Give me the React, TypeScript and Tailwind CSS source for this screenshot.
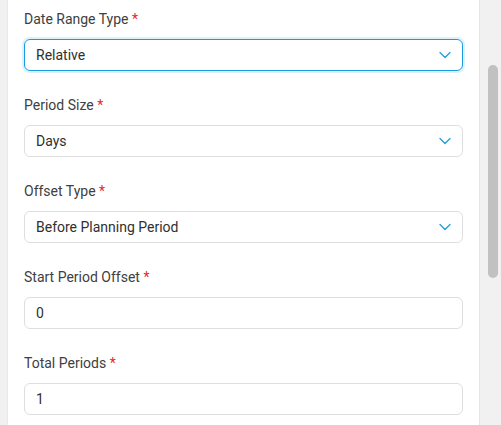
import React from "react";

const Chevron = () => (
  <svg width="12" height="8" viewBox="0 0 12 8" fill="none" className="shrink-0">
    <path d="M1 1.5 L6 6.5 L11 1.5" stroke="#2a9fdb" strokeWidth="1.4" strokeLinecap="round" strokeLinejoin="round" />
  </svg>
);

function Field({ label, value, select, focused }: { label: string; value: string; select?: boolean; focused?: boolean }) {
  return (
    <div className="flex flex-col">
      <div className="h-[20px] text-[14px] leading-[20px] text-[#404040]">
        {label} <span className="text-[#e8262b]">*</span>
      </div>
      <div
        className={
          "mt-[10px] h-[32px] rounded-[6px] border flex items-center justify-between pl-[11px] pr-[11px] text-[14px] text-[#303030] " +
          (focused
            ? "border-[#1c9ae0] shadow-[0_0_0_2px_rgba(120,200,245,0.25)]"
            : "border-[#dedede]")
        }
      >
        <span>{value}</span>
        {select && <Chevron />}
      </div>
    </div>
  );
}

export default function App() {
  return (
    <div className="w-[501px] h-[425px] flex overflow-hidden bg-white" style={{ fontFamily: "Roboto, 'Liberation Sans', sans-serif" }}>
      <div className="w-[8px] h-full bg-[#f1f1f1] border-r border-[#e9e9e9]" />
      <div className="flex-1 h-full bg-white px-[16px] pt-[9px] flex flex-col gap-[24px]">
        <Field label="Date Range Type" value="Relative" select focused />
        <Field label="Period Size" value="Days" select />
        <Field label="Offset Type" value="Before Planning Period" select />
        <Field label="Start Period Offset" value="0" />
        <Field label="Total Periods" value="1" />
      </div>
      <div className="w-[22px] h-full bg-[#f1f1f1] border-l border-[#e4e4e4] pl-[8px] pr-[3px] pt-[65px]">
        <div className="w-[10px] h-[213px] rounded-full bg-[#c1c1c1]" />
      </div>
    </div>
  );
}
